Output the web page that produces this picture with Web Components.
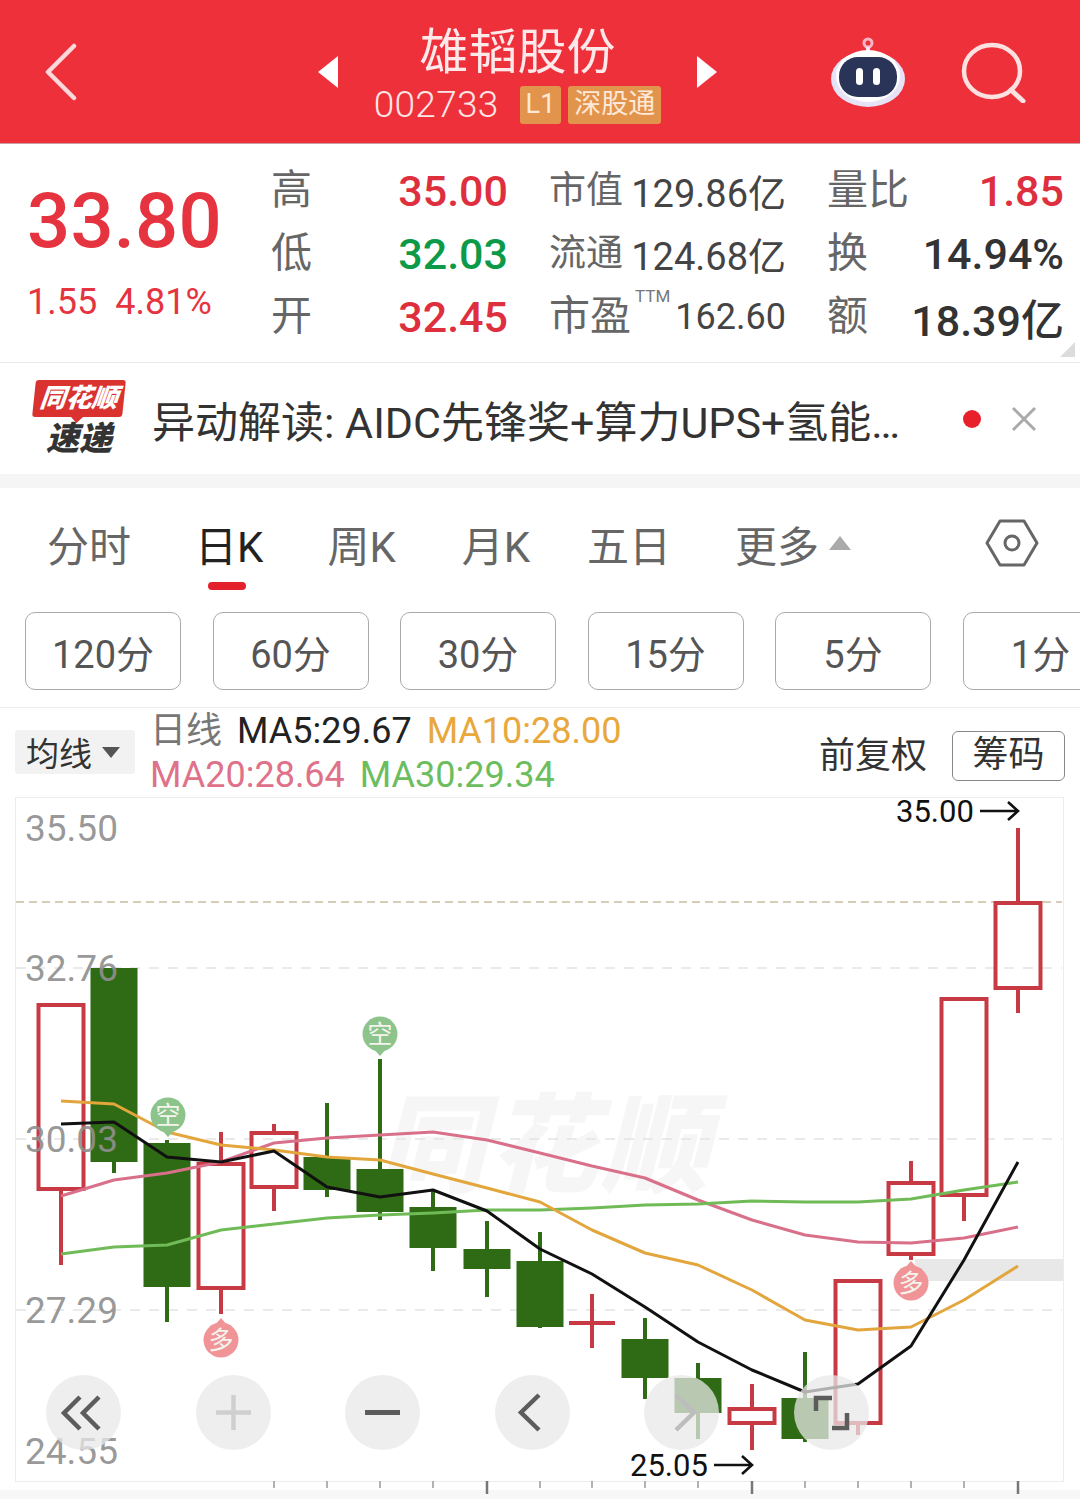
<!DOCTYPE html>
<html lang="zh">
<head>
<meta charset="utf-8">
<title>雄韬股份</title>
<style>
  html, body { margin: 0; padding: 0; background: #fff; }
  body {
    width: 1080px;
    height: 1499px;
    overflow: hidden;
    font-family: Roboto, "Noto Sans CJK SC", sans-serif;
  }
  stock-header, quote-panel, news-bar, period-tabs, period-buttons, ma-legend, kline-chart { display: block; }
</style>
</head>
<body>
<stock-header name="雄韬股份" code="002733"></stock-header>

<quote-panel>
  <quote-cell label="高" value="35.00" tone="up"></quote-cell>
  <quote-cell label="市值" value="129.86亿" tone="plain" small></quote-cell>
  <quote-cell label="量比" value="1.85" tone="up"></quote-cell>
  <quote-cell label="低" value="32.03" tone="down"></quote-cell>
  <quote-cell label="流通" value="124.68亿" tone="plain" small></quote-cell>
  <quote-cell label="换" value="14.94%" tone="dark"></quote-cell>
  <quote-cell label="开" value="32.45" tone="up"></quote-cell>
  <quote-cell label="市盈" sup="TTM" value="162.60" tone="plain" small></quote-cell>
  <quote-cell label="额" value="18.39亿" tone="dark"></quote-cell>
</quote-panel>

<news-bar>异动解读:&nbsp;AIDC先锋奖+算力UPS+氢能…</news-bar>
<period-tabs></period-tabs>
<period-buttons></period-buttons>
<ma-legend></ma-legend>
<kline-chart></kline-chart>

<script>
const CJK = 'Roboto, "Noto Sans CJK SC", sans-serif'

class StockHeader extends HTMLElement {
  constructor() {
    super()
    const shadow = this.attachShadow({ mode: 'open' })
    shadow.innerHTML = `
    <style>
      :host{
        display: block;
        height: 143px;
        background: #ee303b;
        border-bottom: 1px solid #c9a0a4;
        color: #fff;
        font-family: ${CJK};
      }
      .bar{
        height: 143px;
        display: grid;
        grid-template-columns: 318px 399px 363px;
        align-items: center;
      }
      .back{ margin: 0 0 0 44px; display: block; }
      .center{
        display: flex;
        align-items: center;
        justify-content: space-between;
      }
      .title{
        display: flex;
        flex-direction: column;
        align-items: center;
        padding-top: 2px;
      }
      .name{ font-size: 49px; line-height: 62px; color: #fde9ea; }
      .sub{ display: flex; align-items: center; height: 38px; margin-top: 2px; }
      .code{ font-size: 37px; font-weight: 300; margin-right: 21px; color: #fbe6e6; letter-spacing: .3px; }
      .tag{
        height: 38px;
        line-height: 36px;
        background: #e3944c;
        border-radius: 3px;
        font-size: 27px;
        color: #fde9d8;
        padding: 0 6px;
        margin-right: 7px;
      }
      .tag:last-child{ margin-right: 0; }
      .right{ display: flex; align-items: center; padding-left: 113px; gap: 55px; }
    </style>
    <div class="bar">
      <svg class="back" width="34" height="58" viewBox="0 0 34 58">
        <path d="M30 3 L4 29 L30 55" fill="none" stroke="#fbd9da" stroke-width="4.5" stroke-linecap="round" stroke-linejoin="round"/>
      </svg>
      <div class="center">
        <svg width="20" height="32" viewBox="0 0 20 32"><path d="M20 0V32L0 16Z" fill="#fff"/></svg>
        <div class="title">
          <div class="name"></div>
          <div class="sub">
            <span class="code"></span>
            <span class="tag">L1</span>
            <span class="tag">深股通</span>
          </div>
        </div>
        <svg width="20" height="32" viewBox="0 0 20 32"><path d="M0 0V32L20 16Z" fill="#fff"/></svg>
      </div>
      <div class="right">
        <svg width="76" height="70" viewBox="0 0 76 70">
          <circle cx="38" cy="6" r="4" fill="none" stroke="#f6b6c4" stroke-width="3"/>
          <path d="M38 10V18" stroke="#efe6f6" stroke-width="4"/>
          <ellipse cx="38" cy="42" rx="37" ry="28" fill="#e6e3f6"/>
          <ellipse cx="38" cy="39" rx="32" ry="26" fill="#fff"/>
          <rect x="9" y="20" width="58" height="40" rx="19" fill="#2a3358"/>
          <rect x="26" y="31" width="7" height="17" rx="3.5" fill="#fff"/>
          <rect x="43" y="31" width="7" height="17" rx="3.5" fill="#fff"/>
        </svg>
        <svg width="66" height="62" viewBox="0 0 66 62">
          <ellipse cx="31" cy="30" rx="28" ry="26" fill="none" stroke="#fde0e0" stroke-width="4.5"/>
          <path d="M50 49 L62 60" stroke="#fde0e0" stroke-width="5" stroke-linecap="round"/>
        </svg>
      </div>
    </div>`
    shadow.querySelector('.name').textContent = this.getAttribute('name')
    shadow.querySelector('.code').textContent = this.getAttribute('code')
  }
}
customElements.define('stock-header', StockHeader)

const quoteTemplate = document.createElement('template')
quoteTemplate.innerHTML = `
  <style>
    :host{
      display: block;
      height: 218px;
      border-bottom: 1px solid #e8e8e8;
      position: relative;
      font-family: ${CJK};
    }
    .wrap{ display: grid; grid-template-columns: 271px 1fr; height: 218px; }
    .last{ padding: 33px 0 0 27px; color: #e5343f; }
    .price{ font-size: 76px; font-weight: 500; line-height: 88px; letter-spacing: .2px; }
    .chg{ font-size: 36px; line-height: 44px; margin-top: 15px; display: flex; gap: 18px; }
    .grid{
      display: grid;
      grid-template-columns: 237px 237px 237px;
      grid-auto-rows: 63px;
      column-gap: 41px;
      padding-top: 15px;
    }
    .corner{
      position: absolute;
      right: 5px;
      bottom: 5px;
      width: 0;
      height: 0;
      border-left: 15px solid transparent;
      border-bottom: 15px solid #dcdcdc;
    }
  </style>
  <div class="wrap">
    <div class="last">
      <div class="price">33.80</div>
      <div class="chg"><span>1.55</span><span>4.81%</span></div>
    </div>
    <div class="grid"><slot></slot></div>
  </div>
  <div class="corner"></div>`

class QuotePanel extends HTMLElement {
  constructor() {
    super()
    this.attachShadow({ mode: 'open' }).append(quoteTemplate.content.cloneNode(true))
  }
}
customElements.define('quote-panel', QuotePanel)

class QuoteCell extends HTMLElement {
  constructor() {
    super()
    const small = this.hasAttribute('small')
    const sup = this.getAttribute('sup')
    const label = this.getAttribute('label')
    const shadow = this.attachShadow({ mode: 'open' })
    shadow.innerHTML = `
    <style>
      :host{
        display: flex;
        align-items: center;
        justify-content: space-between;
        height: 63px;
        position: relative;
        font-family: ${CJK};
      }
      .label{ font-size: ${small && label !== '市盈' ? 37 : 41}px; color: #666; line-height: 63px; }
      .value{ font-size: ${small ? 38 : 43}px; font-weight: ${small ? 400 : 500}; }
      .up{ color: #de2f3e; }
      .down{ color: #0d9a48; }
      .plain{ color: #444; }
      .dark{ color: #333; }
      .sup{ position: absolute; left: 86px; top: 1px; font-size: 17px; color: #777; }
      .ttm{ font-size: 36px; }
    </style>
    <span class="label"></span>
    ${sup ? `<span class="sup">${sup}</span>` : ''}
    <span class="value ${this.getAttribute('tone')} ${sup ? 'ttm' : ''}"></span>`
    shadow.querySelector('.label').textContent = label
    shadow.querySelector('.value').textContent = this.getAttribute('value')
  }
}
customElements.define('quote-cell', QuoteCell)

class NewsBar extends HTMLElement {
  constructor() {
    super()
    const shadow = this.attachShadow({ mode: 'open' })
    shadow.innerHTML = `
    <style>
      :host{
        display: block;
        height: 111px;
        border-bottom: 14px solid #f5f5f5;
        font-family: ${CJK};
      }
      .row{ display: flex; align-items: center; height: 111px; }
      .logo{
        width: 92px;
        margin: 0 27px 0 33px;
        display: flex;
        flex-direction: column;
        align-items: center;
        flex: none;
      }
      .top{
        position: relative;
        width: 90px;
        height: 37px;
        background: #d9322f;
        border-radius: 3px;
        transform: skewX(-6deg);
        color: #fff;
        font-size: 26px;
        font-weight: 900;
        font-style: italic;
        line-height: 37px;
        text-align: center;
        white-space: nowrap;
      }
      .top::after{
        content: "";
        position: absolute;
        left: 38px;
        bottom: -6px;
        border-left: 7px solid transparent;
        border-right: 7px solid transparent;
        border-top: 7px solid #d9322f;
      }
      .bottom{
        font-size: 33px;
        font-weight: 900;
        font-style: italic;
        color: #333;
        line-height: 38px;
        margin-top: 3px;
      }
      .text{
        width: 800px;
        flex: none;
        font-size: 43px;
        color: #333;
        white-space: nowrap;
        overflow: hidden;
      }
      .dot{ width: 18px; height: 18px; border-radius: 50%; background: #e8202c; margin-left: 11px; flex: none; }
      .close{ margin-left: 30px; flex: none; display: block; }
    </style>
    <div class="row">
      <div class="logo"><div class="top">同花顺</div><div class="bottom">速递</div></div>
      <div class="text"><slot></slot></div>
      <div class="dot"></div>
      <svg class="close" width="26" height="26" viewBox="0 0 26 26">
        <path d="M2 2L24 24M24 2L2 24" stroke="#aaa" stroke-width="3"/>
      </svg>
    </div>`
  }
}
customElements.define('news-bar', NewsBar)

class PeriodTabs extends HTMLElement {
  constructor() {
    super()
    const shadow = this.attachShadow({ mode: 'open' })
    shadow.innerHTML = `
    <style>
      :host{
        display: block;
        height: 112px;
        font-family: ${CJK};
      }
      .tabs{
        display: flex;
        align-items: center;
        height: 110px;
        padding-left: 47px;
        position: relative;
        font-size: 42px;
        color: #666;
      }
      .tab{ position: relative; white-space: nowrap; }
      .on{ color: #222; }
      .on::after{
        content: "";
        position: absolute;
        left: 13px;
        bottom: -16px;
        width: 38px;
        height: 8px;
        border-radius: 4px;
        background: #e4202c;
      }
      .more{ display: flex; align-items: center; gap: 10px; }
      .tri{ width: 0; height: 0; border-left: 11px solid transparent; border-right: 11px solid transparent; border-bottom: 14px solid #aaa; }
      .hex{ margin-left: auto; margin-right: 41px; display: block; }
    </style>
    <div class="tabs">
      <span class="tab" style="margin-right:64px">分时</span>
      <span class="tab on" style="margin-right:64px">日K</span>
      <span class="tab" style="margin-right:66px">周K</span>
      <span class="tab" style="margin-right:57px">月K</span>
      <span class="tab" style="margin-right:64px">五日</span>
      <span class="tab more">更多<i class="tri"></i></span>
      <svg class="hex" width="54" height="48" viewBox="0 0 54 48">
        <path d="M15 2H39L52 24L39 46H15L2 24Z" fill="none" stroke="#666" stroke-width="3" stroke-linejoin="round"/>
        <circle cx="27" cy="24" r="7" fill="none" stroke="#666" stroke-width="3"/>
      </svg>
    </div>`
  }
}
customElements.define('period-tabs', PeriodTabs)

class PeriodButtons extends HTMLElement {
  constructor() {
    super()
    const shadow = this.attachShadow({ mode: 'open' })
    const items = ['120分', '60分', '30分', '15分', '5分', '1分']
    shadow.innerHTML = `
    <style>
      :host{
        display: block;
        height: 107px;
        border-bottom: 1px solid #ececec;
        overflow: hidden;
        font-family: ${CJK};
      }
      .row{
        display: flex;
        gap: 31.5px;
        padding: 12px 0 0 25px;
        width: 1300px;
      }
      .btn{
        box-sizing: border-box;
        width: 156px;
        height: 78px;
        border: 1.5px solid #aaa;
        border-radius: 10px;
        display: flex;
        align-items: center;
        justify-content: center;
        font-size: 38px;
        color: #555;
        flex: none;
      }
    </style>
    <div class="row">${items.map(t => `<div class="btn">${t}</div>`).join('')}</div>`
  }
}
customElements.define('period-buttons', PeriodButtons)

class MaLegend extends HTMLElement {
  constructor() {
    super()
    const shadow = this.attachShadow({ mode: 'open' })
    shadow.innerHTML = `
    <style>
      :host{
        display: block;
        height: 89px;
        font-family: ${CJK};
      }
      .row{ display: flex; align-items: flex-start; height: 89px; }
      .pick{
        width: 120px;
        height: 44px;
        margin: 22px 15px 0 15px;
        background: #f2f2f2;
        border-radius: 3px;
        font-size: 33px;
        color: #333;
        display: flex;
        align-items: center;
        padding-left: 11px;
        box-sizing: border-box;
        gap: 10px;
        flex: none;
      }
      .pick i{ width: 0; height: 0; border-left: 9px solid transparent; border-right: 9px solid transparent; border-top: 11px solid #555; }
      .lines{ font-size: 36px; line-height: 44px; padding-top: 1px; white-space: nowrap; width: 490px; flex: none; }
      .lines div{ display: flex; gap: 15px; }
      .gray{ color: #777; }
      .k{ color: #222; }
      .o{ color: #e8a83c; }
      .p{ color: #e0718a; }
      .g{ color: #6cbd5e; }
      .adj{ font-size: 36px; color: #333; margin: 24px 0 0 179px; line-height: 48px; white-space: nowrap; }
      .chip{
        box-sizing: border-box;
        width: 113px;
        height: 50px;
        margin: 23px 0 0 25px;
        border: 1.5px solid #888;
        border-radius: 6px;
        font-size: 36px;
        line-height: 46px;
        text-align: center;
        color: #333;
        flex: none;
      }
    </style>
    <div class="row">
      <div class="pick">均线<i></i></div>
      <div class="lines">
        <div><span class="gray">日线</span><span class="k">MA5:29.67</span><span class="o">MA10:28.00</span></div>
        <div><span class="p">MA20:28.64</span><span class="g">MA30:29.34</span></div>
      </div>
      <div class="adj">前复权</div>
      <div class="chip">筹码</div>
    </div>`
  }
}
customElements.define('ma-legend', MaLegend)

class ChartBtn extends HTMLElement {
  constructor() {
    super()
    const shadow = this.attachShadow({ mode: 'open' })
    const color = this.getAttribute('color') || '#5c5c5c'
    const width = this.getAttribute('w') || 4.5
    shadow.innerHTML = `
    <style>
      :host{
        display: block;
        width: 75px;
        height: 75px;
        border-radius: 50%;
        background: rgba(232,232,232,.74);
      }
      svg{ display: block; }
    </style>
    <svg width="75" height="75" viewBox="0 0 75 75">
      <path d="${this.getAttribute('d')}" fill="none" stroke="${color}" stroke-width="${width}"/>
    </svg>`
  }
}
customElements.define('chart-btn', ChartBtn)

const candles = [
  // x, bodyTop, bodyBottom, wickTop, wickBottom, up
  [61, 1005, 1189, 1005, 1265, 1],
  [114, 968, 1162, 968, 1173, 0],
  [167, 1143, 1287, 1140, 1322, 0],
  [221, 1164, 1288, 1132, 1314, 1],
  [274, 1133, 1187, 1124, 1211, 1],
  [327, 1157, 1190, 1103, 1197, 0],
  [380, 1169, 1212, 1059, 1220, 0],
  [433, 1207, 1248, 1190, 1271, 0],
  [487, 1249, 1269, 1221, 1297, 0],
  [540, 1261, 1327, 1232, 1328, 0],
  [592, 1323, 1323, 1294, 1348, 1],
  [645, 1339, 1378, 1318, 1399, 0],
  [698, 1378, 1413, 1363, 1439, 0],
  [752, 1409, 1423, 1384, 1450, 1],
  [805, 1398, 1439, 1352, 1442, 0],
  [858, 1281, 1423, 1281, 1435, 1],
  [911, 1183, 1254, 1161, 1260, 1],
  [964, 999, 1195, 999, 1221, 1],
  [1018, 903, 988, 828, 1013, 1]
]
const xs = candles.map(c => c[0])
const ma5 = [1124, 1122, 1157, 1162, 1151, 1187, 1197, 1190, 1211, 1249, 1274, 1307, 1342, 1370, 1392, 1384, 1346, 1260, 1162]
const ma10 = [1101, 1104, 1132, 1145, 1150, 1157, 1160, 1174, 1188, 1202, 1230, 1253, 1265, 1290, 1320, 1330, 1327, 1300, 1266]
const ma20 = [1196, 1180, 1173, 1162, 1143, 1138, 1135, 1132, 1140, 1153, 1166, 1178, 1200, 1220, 1235, 1242, 1243, 1238, 1227]
const ma30 = [1254, 1247, 1245, 1230, 1224, 1218, 1215, 1213, 1210, 1210, 1208, 1205, 1204, 1201, 1202, 1202, 1199, 1190, 1182]

function candleSvg([x, top, bottom, wickTop, wickBottom, up]) {
  const color = up ? '#c73a44' : '#2f6b14'
  let out = `<path d="M${x} ${wickTop}V${wickBottom}" stroke="${color}" stroke-width="4"/>`
  if (top === bottom) {
    out += `<path d="M${x - 23} ${top}H${x + 23}" stroke="${color}" stroke-width="4"/>`
  } else if (up) {
    out = out.replace(`V${wickBottom}`, `V${top}M${x} ${bottom}V${wickBottom}`)
    out += `<rect x="${x - 22.5}" y="${top}" width="45" height="${bottom - top}" fill="none" stroke="${color}" stroke-width="4"/>`
  } else {
    out += `<rect x="${x - 23.5}" y="${top}" width="47" height="${bottom - top}" fill="${color}"/>`
  }
  return out
}

function lineSvg(ys, color, width) {
  const pts = ys.map((y, i) => `${xs[i]},${y}`).join(' ')
  return `<polyline points="${pts}" fill="none" stroke="${color}" stroke-width="${width}" stroke-linejoin="round"/>`
}

function markerSvg(x, y, text, color, pointUp) {
  const tip = pointUp ? y - 22 : y + 22
  const base = pointUp ? y - 14 : y + 14
  return `<path d="M${x - 7} ${base}L${x} ${tip}L${x + 7} ${base}Z" fill="${color}"/>
    <circle cx="${x}" cy="${y}" r="17.5" fill="${color}"/>
    <text x="${x}" y="${y + 9}" font-size="25" text-anchor="middle" fill="#f4f4ec">${text}</text>`
}

function axisLabel(y, text) {
  return `<text x="25" y="${y}" font-size="37" fill="#8f8f8f" fill-opacity=".92">${text}</text>`
}

function arrowLabel(x, y, text) {
  const ax = x + 84
  return `<text x="${x}" y="${y}" font-size="31" fill="#111">${text}</text>
    <path d="M${ax} ${y - 11}H${ax + 38}M${ax + 28} ${y - 20}L${ax + 38} ${y - 11}L${ax + 28} ${y - 2}" fill="none" stroke="#111" stroke-width="2.6"/>`
}

class KlineChart extends HTMLElement {
  constructor() {
    super()
    const shadow = this.attachShadow({ mode: 'open' })
    const ticks = [274, 327, 380, 433, 487, 540, 592, 645, 698, 752, 805, 858, 911, 964, 1018]
    const tall = [487, 752, 1018]
    shadow.innerHTML = `
    <style>
      :host{
        display: block;
        position: relative;
        height: 702px;
        font-family: ${CJK};
      }
      svg.plot{ display: block; }
      .buttons{
        position: absolute;
        left: 46px;
        top: 578px;
        display: flex;
        gap: 74.6px;
      }
    </style>
    <svg class="plot" width="1080" height="702" viewBox="0 797 1080 702">
      <rect x="0" y="1490" width="1080" height="9" fill="#f7f7f7"/>
      <rect x="15.5" y="797.5" width="1048" height="684" fill="#fff" stroke="#ececec"/>
      <text x="545" y="1184" font-size="108" font-weight="900" font-style="italic" text-anchor="middle" fill="#f6f6f6" letter-spacing="4">同花顺</text>
      <rect x="915" y="1259" width="148" height="22" fill="#e8e8e8"/>
      <path d="M16 902H1062" stroke="#c9bda0" stroke-width="1.5" stroke-dasharray="8 5"/>
      ${[968, 1139, 1310].map(y => `<path d="M16 ${y}H1062" stroke="#e4e4e4" stroke-width="1.5" stroke-dasharray="10 9"/>`).join('')}
      ${ticks.map(x => `<path d="M${x} 1481V${tall.includes(x) ? 1494 : 1488}" stroke="${tall.includes(x) ? '#777' : '#999'}" stroke-width="${tall.includes(x) ? 2.5 : 1.5}"/>`).join('')}
      ${candles.map(candleSvg).join('')}
      ${lineSvg(ma20, '#d9708a', 3)}
      ${lineSvg(ma30, '#70bb58', 3)}
      ${lineSvg(ma10, '#e2a63c', 3)}
      ${lineSvg(ma5, '#111', 3)}
      ${markerSvg(168, 1115, '空', '#8cc48c', false)}
      ${markerSvg(380, 1034, '空', '#8cc48c', false)}
      ${markerSvg(221, 1340, '多', '#f09498', true)}
      ${markerSvg(911, 1283, '多', '#f09498', true)}
      ${axisLabel(841, '35.50')}
      ${axisLabel(981, '32.76')}
      ${axisLabel(1152, '30.03')}
      ${axisLabel(1323, '27.29')}
      ${axisLabel(1464, '24.55')}
      ${arrowLabel(896, 822, '35.00')}
      ${arrowLabel(630, 1476, '25.05')}
    </svg>
    <div class="buttons">
      <chart-btn d="M34 22L18 38L34 54M53 22L37 38L53 54"></chart-btn>
      <chart-btn color="#cfcfcf" d="M20 37.5H55M37.5 20V55"></chart-btn>
      <chart-btn d="M20 37.5H55" w="5"></chart-btn>
      <chart-btn d="M44 20L26 37.5L44 55"></chart-btn>
      <chart-btn color="#bdbdbd" d="M32 20L50 37.5L32 55"></chart-btn>
      <chart-btn d="M22 36V23H38M53 38V53H38"></chart-btn>
    </div>`
  }
}
customElements.define('kline-chart', KlineChart)
</script>
</body>
</html>
